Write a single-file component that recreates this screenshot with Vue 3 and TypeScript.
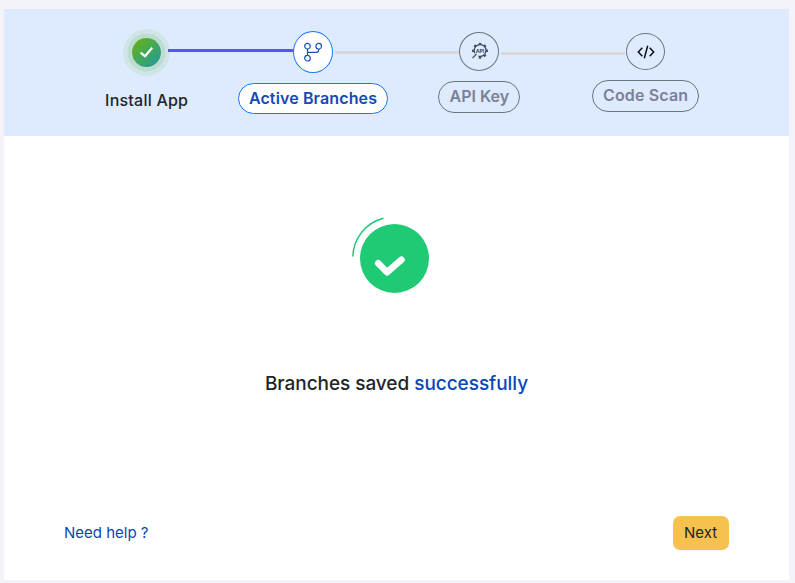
<script setup lang="ts">
interface Step {
  id: string
  label: string
}

const steps: Step[] = [
  { id: 'install', label: 'Install App' },
  { id: 'branches', label: 'Active Branches' },
  { id: 'api', label: 'API Key' },
  { id: 'scan', label: 'Code Scan' },
]

const teeth: number[] = [0, 45, 90, 135, 180, 270, 315]
</script>

<template>
  <div class="page">
    <main class="card">
      <header class="stepper">
        <div class="track">
          <template v-for="step in steps" :key="step.id">
            <div class="node" :class="step.id">
              <svg v-if="step.id === 'install'" width="47" height="47" viewBox="0 0 47 47">
                <defs>
                  <linearGradient id="done" x1="0.15" y1="0.1" x2="0.85" y2="0.9">
                    <stop offset="0" stop-color="#62b01e" />
                    <stop offset="1" stop-color="#249e93" />
                  </linearGradient>
                </defs>
                <circle cx="23.5" cy="23.5" r="23.5" fill="#d0e5e6" />
                <circle cx="23.5" cy="23.5" r="19" fill="#bddcd2" />
                <circle cx="23.5" cy="23.5" r="14.4" fill="url(#done)" />
                <path d="M17.6 23.6l4.4 3.6 7.2-8.5" fill="none" stroke="#fff" stroke-width="2.2" />
              </svg>
              <svg v-else-if="step.id === 'branches'" width="20" height="20" viewBox="0 0 20 20" fill="none" stroke="#1a50b8" stroke-width="1.2">
                <circle cx="4.5" cy="4.2" r="2.8" />
                <circle cx="15.7" cy="4.2" r="2.8" />
                <circle cx="4.5" cy="16.2" r="2.8" />
                <path d="M4.5 7v6.4M15.7 7v1q0 2.4-2.6 2.4H4.5" />
              </svg>
              <svg v-else-if="step.id === 'api'" class="gear" width="18" height="18" viewBox="0 0 18 18" fill="none" stroke="#3e4b5e">
                <path d="M4 11.5A5.9 5.9 0 1 1 7.5 14.2" stroke-width="1.2" />
                <path v-for="a in teeth" :key="a" d="M9 .9v2" stroke-width="2.5" :transform="`rotate(${a} 9 8.8)`" />
                <path d="M1.5 16l4-4" stroke-width="1.1" />
                <text x="9" y="10.5" text-anchor="middle" class="api-text">API</text>
              </svg>
              <svg v-else width="18" height="14" viewBox="0 0 18 14" fill="none" stroke="#080b10" stroke-width="1.45">
                <path d="M5.3 2.8L1.3 7l4 4.2M12.7 2.8l4 4.2-4 4.2M10.7.8L7.3 13.2" />
              </svg>
            </div>
            <div v-if="step.id !== 'scan'" class="line" :class="`after-${step.id}`" />
          </template>
        </div>
        <div class="labels">
          <div v-for="step in steps" :key="step.id" class="cell">
            <span class="label" :class="`label-${step.id}`">{{ step.label }}</span>
          </div>
        </div>
      </header>

      <section class="result">
        <svg class="success" width="80" height="78" viewBox="0 0 80 78" fill="none">
          <circle cx="43.5" cy="42.5" r="34.5" fill="#1fca75" />
          <path d="M1.9 40.5C2.3 23 14 7 32.5 2.3" stroke="#1fc476" stroke-width="1.5" />
          <path d="M27.2 47.3l8.8 9 14.4-12.6" stroke="#fff" stroke-width="6.6" stroke-linecap="round" stroke-linejoin="round" />
        </svg>
        <h1 class="message">Branches saved <span>successfully</span></h1>
      </section>

      <footer class="footer">
        <a class="help">Need help ?</a>
        <button class="next" type="button">Next</button>
      </footer>
    </main>
  </div>
</template>

<style>
body {
  background: #f3f3f9;
}
</style>

<style scoped>
.page {
  box-sizing: border-box;
  height: 583px;
  padding: 9px 6px 3px 4px;
  background: #f3f3f9;
  font-family: Inter, sans-serif;
  color: #212529;
}
.card {
  display: flex;
  flex-direction: column;
  height: 571px;
  background: #fff;
}
.stepper {
  box-sizing: border-box;
  height: 127px;
  padding-top: 20px;
  background: #deebff;
}
.track {
  display: flex;
  align-items: flex-start;
  height: 51px;
  padding-left: 119px;
}
.node {
  box-sizing: border-box;
  display: flex;
  flex: none;
  align-items: center;
  justify-content: center;
  border: 1px solid #6c757d;
  border-radius: 50%;
}
.node svg {
  display: block;
}
.install {
  width: 47px;
  height: 47px;
  border: 0;
}
.branches {
  width: 40px;
  height: 42px;
  margin-top: 2px;
  background: #fff;
  border-color: #1677ff;
}
.api {
  width: 40px;
  height: 39px;
  margin-top: 3px;
}
.node .gear {
  margin: 0 0 1px 1px;
}
.scan {
  width: 39px;
  height: 37px;
  margin-top: 4px;
}
.api-text {
  font: 700 5.2px Inter, sans-serif;
  fill: #3e4b5e;
  stroke: none;
}
.line {
  flex: none;
  height: 3px;
  background: #d8d8dc;
}
.after-install {
  width: 125px;
  margin: 20px 0 0 -2px;
  background: #5355f7;
}
.after-branches {
  width: 124px;
  margin: 22px 0 0 2px;
}
.after-api {
  width: 124px;
  margin: 23px 1px 0 2px;
}
.labels {
  display: grid;
  grid-template-columns: repeat(4, 166.33px);
  padding-left: 59.5px;
}
.cell {
  display: flex;
  align-items: flex-start;
  justify-content: center;
}
.label {
  box-sizing: border-box;
  display: flex;
  align-items: center;
  justify-content: center;
  height: 32px;
  padding-bottom: 2px;
  border: 1px solid #6c757d;
  border-radius: 16px;
  font-size: 16px;
  font-weight: 600;
  color: #7c8097;
  white-space: nowrap;
}
.label-install {
  margin-top: 4px;
  padding-bottom: 0;
  border: 0;
  font-weight: 500;
  letter-spacing: 0.22px;
  color: #212529;
}
.label-branches {
  width: 150px;
  height: 31px;
  margin-top: 3px;
  background: #fff;
  border-color: #1677ff;
  letter-spacing: 0.13px;
  color: #1549b5;
}
.label-api {
  width: 82px;
  margin-top: 1px;
}
.label-scan {
  width: 107px;
  letter-spacing: 0.16px;
}
.result {
  display: flex;
  flex: 1;
  flex-direction: column;
  align-items: center;
  padding-top: 80px;
}
.success {
  display: block;
  margin-right: 12px;
}
.message {
  margin: 78px 0 0;
  font-size: 19px;
  font-weight: 500;
  letter-spacing: -0.05px;
  line-height: 24px;
}
.message span {
  color: #0a47b5;
}
.footer {
  display: flex;
  align-items: center;
  justify-content: space-between;
  padding: 0 60px 30px;
}
.help {
  padding-bottom: 2px;
  font-size: 15px;
  color: #0a47a9;
}
.next {
  width: 56px;
  height: 34px;
  padding: 0 1px 2px 0;
  border: 0;
  border-radius: 7px;
  background: #f6c14f;
  font: 400 15px Inter, sans-serif;
  color: #212529;
}
</style>
